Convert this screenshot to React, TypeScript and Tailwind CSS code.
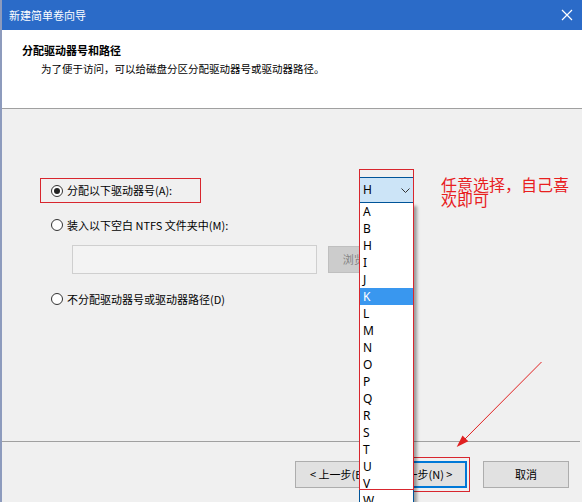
const drives = ['A', 'B', 'H', 'I', 'J', 'K', 'L', 'M', 'N', 'O', 'P', 'Q', 'R', 'S', 'T', 'U', 'V', 'W', 'X']

function Radio({ checked }: { checked?: boolean }) {
  return (
    <span className="w-[12px] h-[12px] rounded-full border border-[#333333] bg-white flex items-center justify-center shrink-0">
      {checked && <span className="w-[6px] h-[6px] rounded-full bg-[#222222]" />}
    </span>
  )
}

function DriveCombo() {
  return (
    <div className="relative w-[55px] h-[26px] -mt-[1px] ml-[158px]">
      <div className="h-full bg-[#cce4f7] border border-[#005499] flex items-center justify-between pl-[3px] pr-[3px] font-['Noto_Sans',sans-serif] text-[12px]">
        <span>H</span>
        <svg width="9" height="5" viewBox="0 0 9 5">
          <path d="M0.5 0.5L4.5 4.5L8.5 0.5" fill="none" stroke="#333333" strokeWidth="1" />
        </svg>
      </div>
      <ul className="absolute top-[26px] left-0 w-[55px] bg-white border-x border-[#005499] shadow-[3px_3px_3px_rgba(0,0,0,0.35)] z-20 font-['Noto_Sans',sans-serif] text-[12px]">
        {drives.map((d) => (
          <li
            key={d}
            className={d === 'K' ? 'h-[17px] leading-[17px] pl-[3px] bg-[#3997ef] text-white' : 'h-[17px] leading-[17px] pl-[3px]'}
          >
            {d}
          </li>
        ))}
      </ul>
      {/* annotation box */}
      <div className="absolute -top-[8px] left-0 w-[55px] h-[321px] border border-[#d8262e] z-30 pointer-events-none" />
    </div>
  )
}

export default function App() {
  return (
    <div className="relative w-[582px] h-[502px] overflow-hidden flex bg-[#f0f0f0] text-black font-['Noto_Sans_CJK_SC',sans-serif]">
      <div className="w-[2px] shrink-0 bg-[#8d9bbd]" />
      <div className="flex-1 flex flex-col">
        <div className="h-[30px] shrink-0 bg-[#2b6bc8] text-white flex items-center justify-between pl-[7px] pr-[9px]">
          <span className="text-[11px] leading-none">新建简单卷向导</span>
          <svg width="12" height="12" viewBox="0 0 12 12">
            <path d="M1 1L11 11M11 1L1 11" stroke="white" strokeWidth="1.2" />
          </svg>
        </div>

        <div className="h-[79px] shrink-0 bg-white border-b border-[#a0a0a0] pl-[20px] pt-[13px]">
          <div className="text-[11px] leading-[14px] font-bold">分配驱动器号和路径</div>
          <div className="text-[10.5px] leading-[14px] mt-[5px] pl-[19px]">为了便于访问，可以给磁盘分区分配驱动器号或驱动器路径。</div>
        </div>

        <div className="h-[332px] shrink-0 pl-[38px] text-[11px]">
          <div className="flex items-start mt-[69px]">
            <div className="flex items-center gap-[4px] w-[161px] h-[25px] border border-[#d8262e] pl-[10px]">
              <Radio checked />
              <span>分配以下驱动器号(A):</span>
            </div>
            <DriveCombo />
          </div>

          <div className="flex items-center gap-[4px] h-[16px] mt-[14px] pl-[11px]">
            <Radio />
            <span>装入以下空白 NTFS 文件夹中(M):</span>
          </div>

          <div className="flex items-center mt-[12px] pl-[32px]">
            <div className="w-[245px] h-[29px] border border-[#cfcfcf] bg-[#f3f3f3]" />
            <div className="w-[75px] h-[27px] ml-[11px] bg-[#cccccc] border border-[#bfbfbf] text-[#838383] flex items-center justify-center">
              浏览(R)...
            </div>
          </div>

          <div className="flex items-center gap-[4px] h-[16px] mt-[17px] pl-[11px]">
            <Radio />
            <span>不分配驱动器号或驱动器路径(D)</span>
          </div>
        </div>

        <div className="h-[1px] shrink-0 bg-[#a0a0a0] mr-[2px]" />

        <div className="flex-1 flex items-start justify-end pt-[19px] pr-[13px] text-[11px]">
          <button className="w-[86px] h-[27px] bg-[#e1e1e1] border border-[#adadad]">&lt; 上一步(B)</button>
          <button className="w-[86px] h-[27px] bg-[#e1e1e1] border-2 border-[#0078d7]">下一步(N) &gt;</button>
          <button className="w-[86px] h-[27px] ml-[16px] bg-[#e1e1e1] border border-[#adadad]">取消</button>
        </div>
      </div>

      {/* annotations */}
      <div className="absolute left-[413px] top-[457px] w-[57px] h-[35px] border border-[#d8262e] z-10 pointer-events-none" />
      <div className="absolute left-[441px] top-[177px] text-[16px] leading-[15px] text-[#e8201f] z-30">
        任意选择，自己喜
        <br />
        欢即可
      </div>
      <svg className="absolute inset-0 z-30 pointer-events-none" width="582" height="502" viewBox="0 0 582 502">
        <line x1="541.5" y1="362" x2="464" y2="440" stroke="#e02020" strokeWidth="1" />
        <polygon points="456.7,447 468.3,441.2 462.5,435.4" fill="#e02020" />
      </svg>
    </div>
  )
}
